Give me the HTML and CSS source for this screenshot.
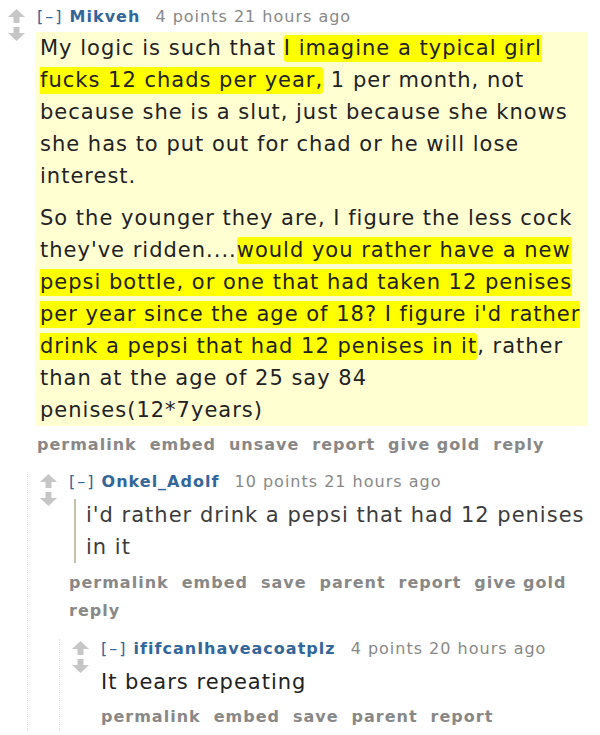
FILE: index.html
```html
<!DOCTYPE html>
<html>
<head>
<meta charset="utf-8">
<link rel="stylesheet" href="styles.css">
</head>
<body>
<div class="thread">
  <div class="comment">
    <div class="row">
      <div class="midcol">
        <svg class="arrow" width="17" height="14" viewBox="0 0 17 14"><path d="M8.5 0 L17 8 L11.5 8 L11.5 14 L5.5 14 L5.5 8 L0 8 Z"/></svg>
        <svg class="arrow" width="17" height="14" viewBox="0 0 17 14"><path d="M8.5 14 L17 6 L11.5 6 L11.5 0 L5.5 0 L5.5 6 L0 6 Z"/></svg>
      </div>
      <div class="entry">
        <p class="tagline"><span class="expand">[–]</span> <span class="author">Mikveh</span> <span class="score">4 points 21 hours ago</span></p>
        <div class="usertext saved">
          <p>My logic is such that <span class="hl">I imagine a typical girl fucks 12 chads per year,</span> 1 per month, not because she is a slut, just because she knows she has to put out for chad or he will lose interest.</p>
          <p>So the younger they are, I figure the less cock they've ridden....<span class="hl">would you rather have a new pepsi bottle, or one that had taken 12 penises per year since the age of 18? I figure i'd rather drink a pepsi that had 12 penises in it</span>, rather than at the age of 25 say 84 penises(12*7years)</p>
        </div>
        <ul class="buttons">
          <li>permalink</li><li>embed</li><li>unsave</li><li>report</li><li>give gold</li><li>reply</li>
        </ul>
      </div>
    </div>
    <div class="child">
      <div class="comment">
        <div class="row">
          <div class="midcol">
            <svg class="arrow" width="17" height="14" viewBox="0 0 17 14"><path d="M8.5 0 L17 8 L11.5 8 L11.5 14 L5.5 14 L5.5 8 L0 8 Z"/></svg>
            <svg class="arrow" width="17" height="14" viewBox="0 0 17 14"><path d="M8.5 14 L17 6 L11.5 6 L11.5 0 L5.5 0 L5.5 6 L0 6 Z"/></svg>
          </div>
          <div class="entry">
            <p class="tagline"><span class="expand">[–]</span> <span class="author">Onkel_Adolf</span> <span class="score">10 points 21 hours ago</span></p>
            <div class="usertext quoted">
              <blockquote><p>i'd rather drink a pepsi that had 12 penises in it</p></blockquote>
            </div>
            <ul class="buttons spaced">
              <li>permalink</li><li>embed</li><li>save</li><li>parent</li><li>report</li><li>give gold</li><li>reply</li>
            </ul>
          </div>
        </div>
        <div class="child">
          <div class="comment">
            <div class="row">
              <div class="midcol">
                <svg class="arrow" width="17" height="14" viewBox="0 0 17 14"><path d="M8.5 0 L17 8 L11.5 8 L11.5 14 L5.5 14 L5.5 8 L0 8 Z"/></svg>
                <svg class="arrow" width="17" height="14" viewBox="0 0 17 14"><path d="M8.5 14 L17 6 L11.5 6 L11.5 0 L5.5 0 L5.5 6 L0 6 Z"/></svg>
              </div>
              <div class="entry">
                <p class="tagline"><span class="expand">[–]</span> <span class="author">ififcanIhaveacoatplz</span> <span class="score">4 points 20 hours ago</span></p>
                <div class="usertext quoted">
                  <p>It bears repeating</p>
                </div>
                <ul class="buttons">
                  <li>permalink</li><li>embed</li><li>save</li><li>parent</li><li>report</li>
                </ul>
              </div>
            </div>
          </div>
        </div>
      </div>
    </div>
  </div>
</div>
</body>
</html>
```

FILE: styles.css
```css
html, body {
  margin: 0;
  padding: 0;
  background: #ffffff;
}
body {
  font-family: "DejaVu Sans", Verdana, sans-serif;
  color: #222222;
}
.thread {
  padding: 7px 12px 0 8px;
}
.row {
  display: flex;
  align-items: flex-start;
}
.midcol {
  width: 17px;
  flex: none;
  margin-right: 12px;
  display: flex;
  flex-direction: column;
  gap: 4px;
  padding-top: 2px;
}
.arrow {
  display: block;
  fill: #c6c6c6;
}
.entry {
  flex: 1;
  min-width: 0;
}
.tagline {
  margin: 0 0 5px;
  font-size: 16px;
  line-height: 20px;
  letter-spacing: 1px;
  color: #888888;
  white-space: nowrap;
}
.expand {
  color: #336699;
  letter-spacing: 2px;
}
.author {
  color: #336699;
  font-weight: bold;
  margin-right: 9px;
}
.usertext {
  font-size: 21px;
  line-height: 32px;
  letter-spacing: 1px;
  color: #222222;
}
.usertext.quoted {
  padding-top: 2px;
}
.usertext p {
  margin: 0 0 10px;
}
.usertext p:last-child {
  margin-bottom: 0;
}
.saved {
  background: #ffffd2;
  margin-left: -2px;
  padding: 0 6px 0 5px;
}
.hl {
  background: #ffff00;
  padding: 1px 0 2px;
  border-radius: 3px;
}
blockquote {
  margin: 0 0 0 5px;
  padding: 0 0 0 10px;
  border-left: 2px solid #c5c1ad;
  color: #3c3c3c;
}
.buttons {
  list-style: none;
  margin: 5px 0 0;
  padding: 0;
  display: flex;
  flex-wrap: wrap;
  column-gap: 13px;
  font-size: 16px;
  line-height: 28px;
  letter-spacing: 1px;
  font-weight: bold;
  color: #888888;
}
.buttons.spaced {
  margin-top: 6px;
}
.child {
  margin-left: 19px;
  border-left: 1px dotted #ddddff;
  padding-left: 12px;
  margin-top: 13px;
}
.child .child {
  margin-top: 14px;
}
```
